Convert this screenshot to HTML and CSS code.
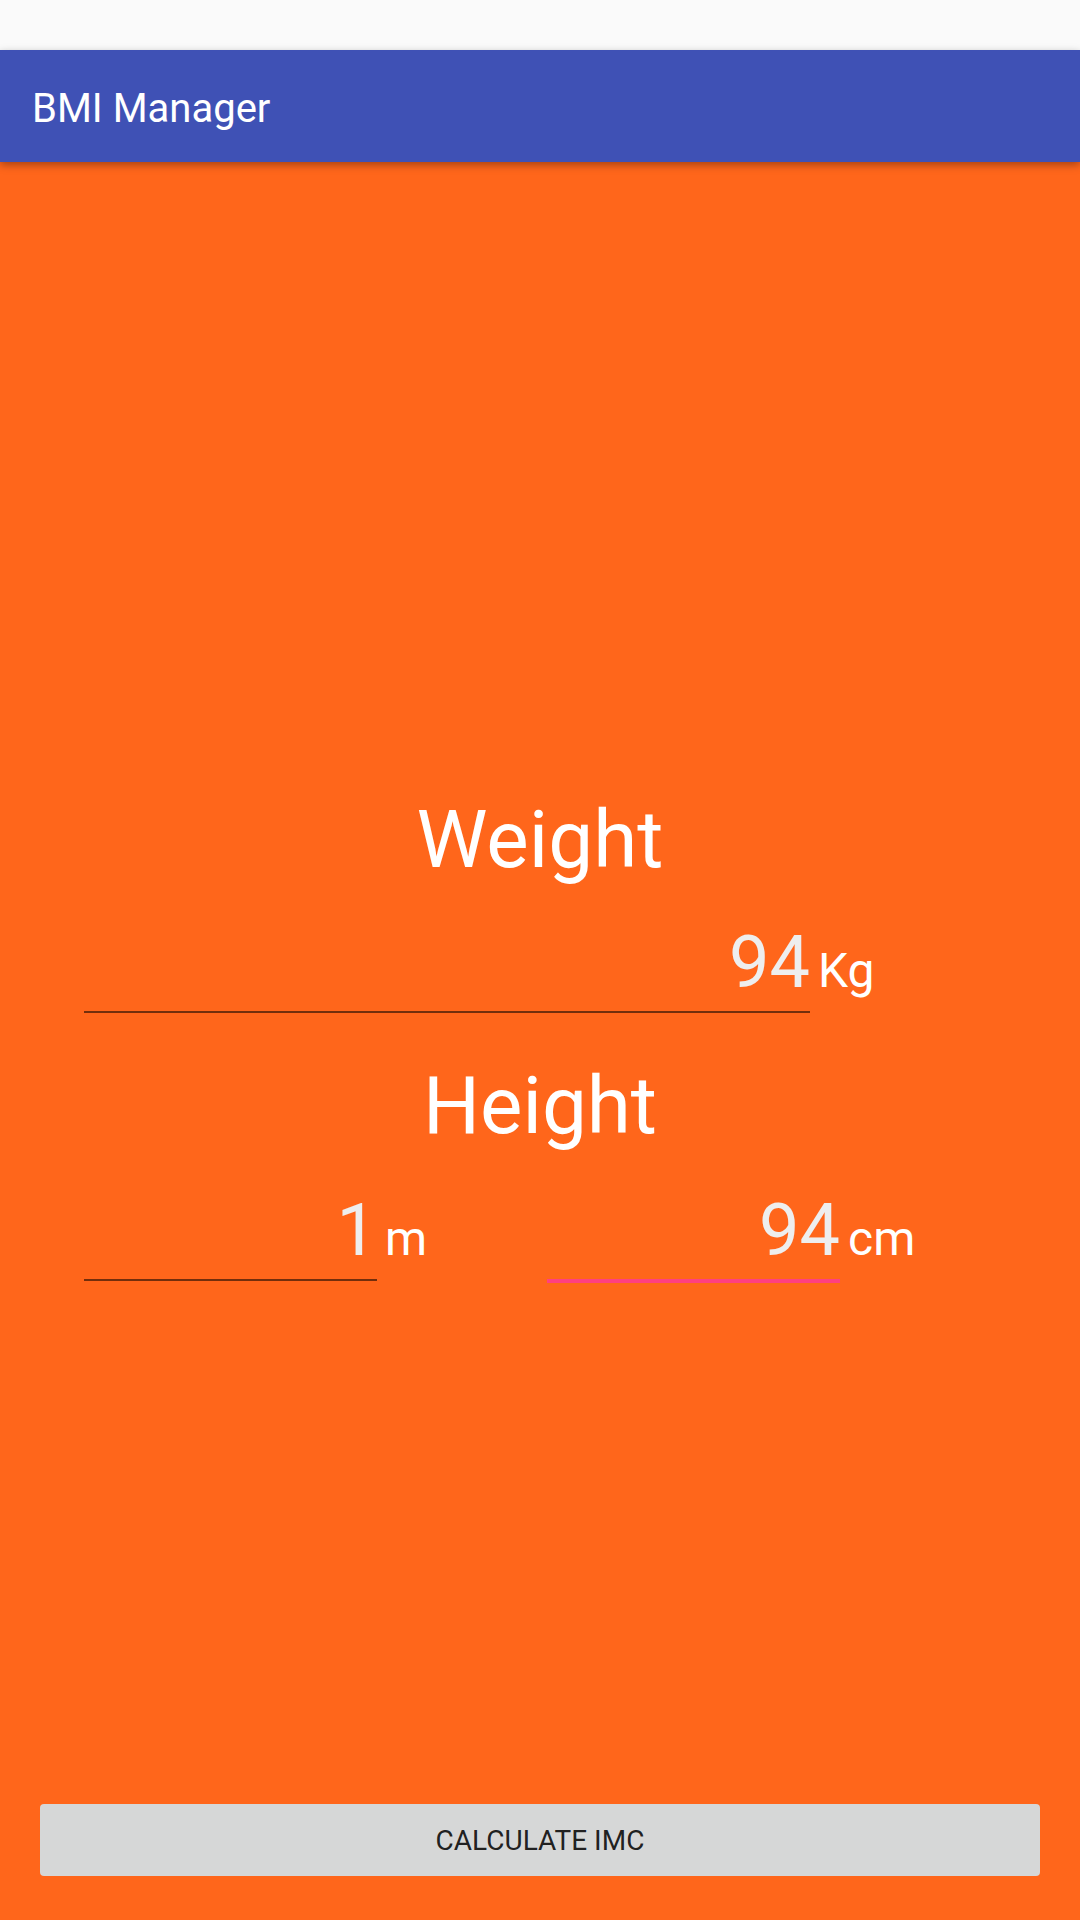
FILE: index.html
```html
<html>
<head>
<link rel="stylesheet" href="styles.css">
<title>BMI Manager</title>
</head>
<body>
	<div class="statusbar"></div>
	<div class="appbar">BMI Manager</div>
	<div class="main">
		<div class="form">
			<h1 class="label">Weight</h1>
			<div class="row weight-row">
				<div class="field wide">94</div>
				<span class="unit">Kg</span>
			</div>
			<h1 class="label height-label">Height</h1>
			<div class="row height-row">
				<div class="group">
					<div class="field half">1</div>
					<span class="unit">m</span>
				</div>
				<div class="group">
					<div class="field half focused">94</div>
					<span class="unit">cm</span>
				</div>
			</div>
		</div>
		<button class="calc">Calculate IMC</button>
	</div>
</body>
</html>
```

FILE: styles.css
```css
* {
  margin: 0;
  padding: 0;
  box-sizing: border-box;
}

body {
  font-family: Roboto, "Liberation Sans", sans-serif;
  background: #ff661b;
  width: 1080px;
  height: 1920px;
  display: flex;
  flex-direction: column;
  overflow: hidden;
}

.statusbar {
  height: 50px;
  background: #fafafa;
}

.appbar {
  height: 112px;
  background: #3f51b5;
  color: #fff;
  font-size: 40px;
  line-height: 107px;
  padding: 5px 0 0 32px;
  box-shadow: 0 3px 8px rgba(0, 0, 0, 0.35);
  position: relative;
  z-index: 1;
}

.main {
  flex: 1;
  display: flex;
  flex-direction: column;
}

.form {
  padding-top: 631px;
}

.label {
  font-weight: normal;
  font-size: 80px;
  line-height: 94px;
  color: #fff;
  text-align: center;
}

.height-label {
  margin-top: 46px;
}

.row {
  display: flex;
  align-items: baseline;
  padding-left: 84px;
  margin-top: 36px;
}

.height-row {
  margin-top: 38px;
}

.group {
  width: 463px;
  display: flex;
  align-items: baseline;
}

.field {
  font-size: 72px;
  line-height: 80px;
  color: #eeeeee;
  text-align: right;
  padding-bottom: 8px;
  border-bottom: 2px solid rgba(0, 0, 0, 0.55);
}

.field.wide {
  width: 726px;
}

.field.half {
  width: 293px;
}

.field.focused {
  border-bottom: 4px solid #ff4081;
  padding-bottom: 8px;
  margin-bottom: -2px;
}

.unit {
  font-size: 48px;
  color: #fff;
  margin-left: 8px;
}

.calc {
  margin: auto 40px 44px 40px;
  height: 72px;
  border: none;
  border-radius: 4px;
  background: #d6d7d7;
  color: rgba(0, 0, 0, 0.87);
  font-family: Roboto, "Liberation Sans", sans-serif;
  font-size: 28px;
  font-weight: 400;
  text-transform: uppercase;
}
```
